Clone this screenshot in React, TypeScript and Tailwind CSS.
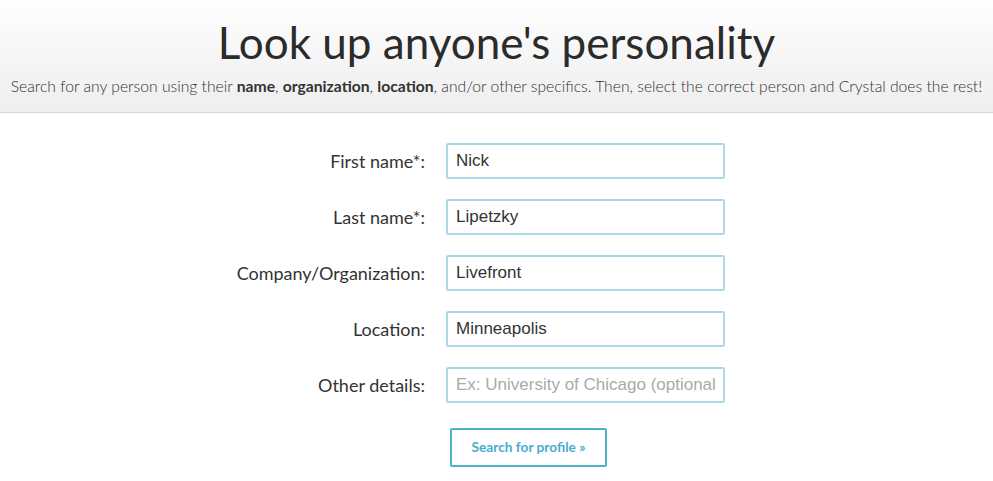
const fields = [
  { label: "First name*:", value: "Nick" },
  { label: "Last name*:", value: "Lipetzky" },
  { label: "Company/Organization:", value: "Livefront" },
  { label: "Location:", value: "Minneapolis" },
  { label: "Other details:", value: "", placeholder: "Ex: University of Chicago (optional)" },
];

export default function App() {
  return (
    <div className="min-h-[481px] bg-white font-['Lato','Open_Sans',sans-serif] text-[#333]">
      <div className="border-b border-[#d6d6d6] bg-gradient-to-b from-[#fefefe] to-[#eeeeee] pb-[15px] pt-[14px] text-center">
        <h1 className="text-[44px] leading-[56px] font-normal text-[#2b2b2b]">Look up anyone's personality</h1>
        <p className="mt-[5px] text-[15.7px] leading-[22px] font-light">
          Search for any person using their <b className="font-bold">name</b>, <b className="font-bold">organization</b>,{" "}
          <b className="font-bold">location</b>, and/or other specifics. Then, select the correct person and Crystal does the rest!
        </p>
      </div>

      <form className="flex flex-col gap-[20px] pt-[30px]" onSubmit={(e) => e.preventDefault()}>
        {fields.map((f) => (
          <div key={f.label} className="grid grid-cols-[425px_279px] items-center gap-[21px]">
            <label className="text-right text-[18px] text-[#333]">{f.label}</label>
            <input
              defaultValue={f.value}
              placeholder={f.placeholder}
              className="h-[36px] w-[279px] rounded-[2px] border-2 border-[#add8e6] px-[8px] font-['Liberation_Sans',Arial,sans-serif] text-[17px] text-[#333] outline-none placeholder:text-[#aaa]"
            />
          </div>
        ))}
        <div className="pl-[450px] pt-[5px]">
          <button
            type="submit"
            className="h-[39px] w-[157px] rounded-[2px] border-2 border-[#4ab1cf] bg-white text-[13.7px] font-bold text-[#4aacd0]"
          >
            Search for profile »
          </button>
        </div>
      </form>
    </div>
  );
}
